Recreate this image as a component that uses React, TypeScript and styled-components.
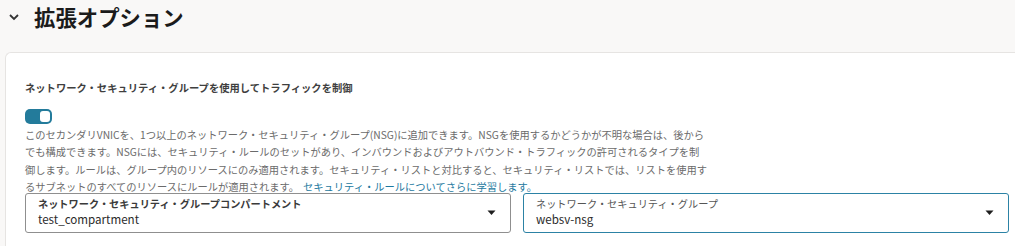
import React from "react";
import styled, { createGlobalStyle } from "styled-components";

const Global = createGlobalStyle`
  html, body { margin: 0; padding: 0; background: #ffffff; }
  body { font-family: "Noto Sans CJK JP", "Noto Sans", sans-serif; }
`;

const Page = styled.div`
  width: 1015px;
  height: 246px;
  background: #f9f8f7;
  display: flex;
  flex-direction: column;
  overflow: hidden;
`;

const Header = styled.div`
  display: flex;
  align-items: center;
  height: 33px;
  padding: 0 0 0 8px;
  gap: 14px;
`;

const Title = styled.h2`
  margin: 0;
  font-size: 21.4px;
  font-weight: 700;
  color: #1b1b1b;
  line-height: 33px;
`;

const Card = styled.div`
  margin: 19px -9px 0 5px;
  flex: 1;
  background: #ffffff;
  border: 1px solid #e6e4e2;
  border-right: none;
  border-bottom: none;
  border-top-left-radius: 6px;
  padding: 27px 0 0 19px;
  display: flex;
  flex-direction: column;
`;

const FieldLabel = styled.div`
  font-size: 10.3px;
  font-weight: 700;
  color: #3f3f3f;
  line-height: 16px;
`;

const Toggle = styled.div<{ $on: boolean }>`
  margin-top: 13px;
  width: 27px;
  height: 15px;
  box-sizing: border-box;
  border-radius: 5px;
  background: ${(p) => (p.$on ? "#237b9b" : "#bbb")};
  display: flex;
  justify-content: ${(p) => (p.$on ? "flex-end" : "flex-start")};
  align-items: center;
  padding: 0 2px;
`;

const Knob = styled.span`
  width: 10px;
  height: 11px;
  border-radius: 3px;
  background: #ffffff;
`;

const Help = styled.p`
  margin: 2px 0 0 0;
  font-size: 10.25px;
  line-height: 17.4px;
  color: #6b6b6b;
  white-space: nowrap;
`;

const Link = styled.a`
  color: #1d79a0;
  text-decoration: none;
  margin-left: 4px;
`;

const SelectRow = styled.div`
  display: grid;
  grid-template-columns: 486px 486px;
  gap: 12px;
  margin-top: -3px;
`;

const Select = styled.div<{ $focused?: boolean }>`
  height: 40px;
  box-sizing: border-box;
  border: ${(p) => (p.$focused ? "1.5px solid #2c82a5" : "1px solid #8f8f8f")};
  border-radius: 3px;
  background: #fff;
  display: flex;
  align-items: center;
  padding: 0 14px 0 12px;
`;

const SelectText = styled.div`
  flex: 1;
  display: flex;
  flex-direction: column;
`;

const SelectLabel = styled.span<{ $bold?: boolean }>`
  font-size: 10.2px;
  font-weight: ${(p) => (p.$bold ? 700 : 400)};
  color: ${(p) => (p.$bold ? "#3a3a3a" : "#555")};
  line-height: 14px;
`;

const SelectValue = styled.span`
  font-size: 11.6px;
  color: #2b2b2b;
  line-height: 17px;
`;

const Caret = () => (
  <svg width="9" height="6" viewBox="0 0 9 6">
    <path d="M0.5 0.5 L8.5 0.5 L4.5 5 Z" fill="#1e1e1e" />
  </svg>
);

const Chevron = () => (
  <svg width="12" height="8" viewBox="0 0 12 8">
    <path d="M2 2 L6 6 L10 2" fill="none" stroke="#333" strokeWidth="1.8" />
  </svg>
);

export default function App() {
  return (
    <>
      <Global />
      <Page>
        <Header>
          <Chevron />
          <Title>拡張オプション</Title>
        </Header>
        <Card>
          <FieldLabel>ネットワーク・セキュリティ・グループを使用してトラフィックを制御</FieldLabel>
          <Toggle $on>
            <Knob />
          </Toggle>
          <Help>
            このセカンダリVNICを、1つ以上のネットワーク・セキュリティ・グループ(NSG)に追加できます。NSGを使用するかどうかが不明な場合は、後から
            <br />
            でも構成できます。NSGには、セキュリティ・ルールのセットがあり、インバウンドおよびアウトバウンド・トラフィックの許可されるタイプを制
            <br />
            御します。ルールは、グループ内のリソースにのみ適用されます。セキュリティ・リストと対比すると、セキュリティ・リストでは、リストを使用す
            <br />
            るサブネットのすべてのリソースにルールが適用されます。
            <Link href="#">セキュリティ・ルールについてさらに学習します。</Link>
          </Help>
          <SelectRow>
            <Select>
              <SelectText>
                <SelectLabel $bold>ネットワーク・セキュリティ・グループコンパートメント</SelectLabel>
                <SelectValue>test_compartment</SelectValue>
              </SelectText>
              <Caret />
            </Select>
            <Select $focused>
              <SelectText>
                <SelectLabel>ネットワーク・セキュリティ・グループ</SelectLabel>
                <SelectValue>websv-nsg</SelectValue>
              </SelectText>
              <Caret />
            </Select>
          </SelectRow>
        </Card>
      </Page>
    </>
  );
}
